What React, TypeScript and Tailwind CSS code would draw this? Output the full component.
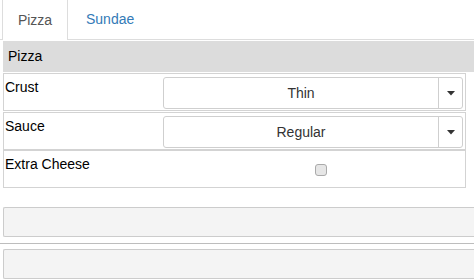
import React from "react";

function Arrow() {
  return (
    <svg width="8" height="5" viewBox="0 0 8 5" className="block">
      <path d="M0 0 H8 L4 4.5 Z" fill="#333" />
    </svg>
  );
}

function SelectBox({ value }: { value: string }) {
  return (
    <div className="flex h-[32px] w-[300px] rounded-[3px] border border-[#cfcfcf] bg-white">
      <div className="flex flex-1 items-center justify-center text-[14px] text-[#333]">{value}</div>
      <div className="flex w-[24px] items-center justify-center border-l border-[#cfcfcf]">
        <Arrow />
      </div>
    </div>
  );
}

export default function App() {
  return (
    <div className="h-[280px] w-[474px] overflow-hidden bg-white" style={{ fontFamily: '"Liberation Sans", Arial, sans-serif' }}>
      {/* tabs */}
      <div className="flex h-[40px] border-b border-[#dddddd]">
        <div className="ml-[2px] -mb-px flex h-[40px] w-[66px] items-center justify-center border-x border-[#dddddd] bg-white text-[14px] text-[#555]">
          Pizza
        </div>
        <div className="ml-[18px] flex items-center text-[14px] text-[#337ab7]">Sundae</div>
      </div>
      <div className="ml-[3px] mt-[1px] flex h-[31px] items-center bg-[#dcdcdc] pl-[5px] text-[14px] text-black">
        Pizza
      </div>
      <div className="ml-[3px] mt-[1px] w-[463px]">
        <div className="flex h-[38px] border border-[#d3d3d3]">
          <div className="w-[159px] pl-[1px] pt-[5px] text-[14px] leading-[16px] text-black">Crust</div>
          <div className="pt-[3px]">
            <SelectBox value="Thin" />
          </div>
        </div>
        <div className="mt-px flex h-[38px] border border-[#d3d3d3]">
          <div className="w-[159px] pl-[1px] pt-[5px] text-[14px] leading-[16px] text-black">Sauce</div>
          <div className="pt-[3px]">
            <SelectBox value="Regular" />
          </div>
        </div>
        <div className="flex h-[38px] border border-[#d3d3d3] border-t-[#d3d3d3]">
          <div className="w-[159px] pl-[1px] pt-[5px] text-[14px] leading-[16px] text-black">Extra Cheese</div>
          <div className="flex w-[300px] pt-[13px]">
            <div className="ml-[152px] h-[12px] w-[12px] rounded-[3px] border border-[#aaa] bg-[#e6e6e6]" />
          </div>
        </div>
      </div>
      <div className="ml-[3px] mt-[19px] h-[30px] rounded-l-[2px] border-y border-l border-[#cccccc] bg-[#f4f4f4]" />
      <div className="mt-[6px] h-px bg-[#bdbdbd]" />
      <div className="ml-[3px] mt-[5px] h-[30px] rounded-l-[2px] border-y border-l border-[#cccccc] bg-[#f4f4f4]" />
    </div>
  );
}
